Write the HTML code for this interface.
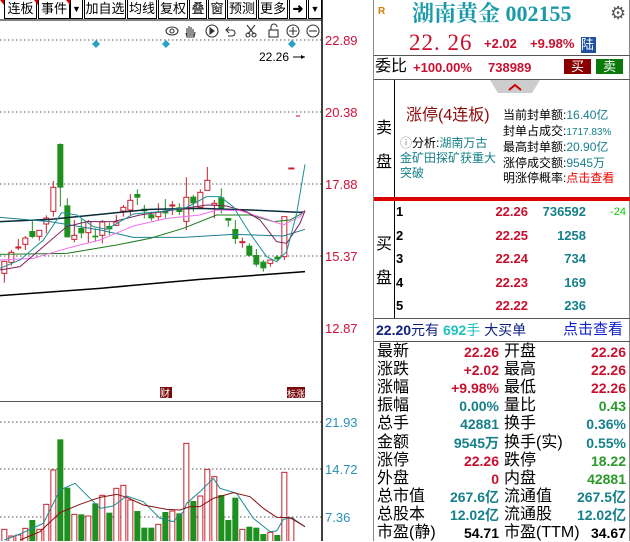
<!DOCTYPE html>
<html><head><meta charset="utf-8">
<style>
*{margin:0;padding:0;box-sizing:border-box}
body{width:630px;height:541px;background:#fff;position:relative;overflow:hidden;font-family:"Liberation Sans","Noto Sans CJK SC",sans-serif;line-height:1.15}
.a{position:absolute;white-space:nowrap}
.tb{position:absolute;top:0;height:19px;border:1px solid #000;border-top:none;font-size:13px;line-height:18px;text-align:center;background:#fff}
.r{color:#c8102e}.t{color:#16808a}.g{color:#2a9a2a}.k{color:#000}
.st{position:absolute;left:376px;width:252px;height:18px;font-size:16px;line-height:18px}
.st span{position:absolute;top:0}
.v{font-weight:bold;font-size:14px;text-align:right}
</style></head><body>
<div class="tb" style="left:4px;width:33px">连板</div>
<div class="tb" style="left:38px;width:32px">事件</div>
<div class="tb" style="left:70px;width:13px;font-size:9px">▼</div>
<div class="tb" style="left:84px;width:42px">加自选</div>
<div class="tb" style="left:127px;width:30px">均线</div>
<div class="tb" style="left:158px;width:30px">复权</div>
<div class="tb" style="left:189px;width:18px">叠</div>
<div class="tb" style="left:208px;width:18px">窗</div>
<div class="tb" style="left:227px;width:30px">预测</div>
<div class="tb" style="left:258px;width:30px">更多</div>
<div class="tb" style="left:289px;width:18px;font-weight:bold">➜</div>
<div class="tb" style="left:308px;width:14px;font-size:9px">▼</div>
<svg class="a" style="left:0;top:0" width="370" height="541">
<g fill="#c00"><polygon points="0,0 4,0 4,5"/><polygon points="34,0 38,0 38,5"/><polygon points="66,0 70,0 70,5"/></g>
<g stroke="#333" fill="none" stroke-width="1.1">
<ellipse cx="172" cy="31" rx="6" ry="4"/><circle cx="172" cy="31" r="2"/>
<path d="M187 36v-8M189 36v-10M191 36v-9M193 36v-7M186 33l1 4h7l1-5"/>
<circle cx="212" cy="31" r="6"/><path d="M210 28l4 3-4 3z" fill="#333"/>
<path d="M229 27l-3 3 3 3M226 30h6a3 3 0 010 6h-4"/>
<circle cx="248" cy="35" r="2"/><circle cx="254" cy="35" r="2"/><path d="M247 25l7 9M255 25l-7 9"/>
<rect x="269" y="30" width="9" height="7"/><path d="M271 30v-3a3 3 0 016 0"/>
<circle cx="293" cy="31" r="6"/><path d="M289 31h8M293 27v8"/>
<circle cx="313" cy="31" r="6"/><path d="M309 31h8"/>
</g>
<line x1="322" y1="0" x2="322" y2="541" stroke="#000" stroke-width="1.5"/>
<line x1="0" y1="20" x2="322" y2="20" stroke="#000"/>
<line x1="0" y1="401.5" x2="322" y2="401.5" stroke="#555"/>
<g stroke="#555" stroke-dasharray="1.5,2.5"><line x1="0" y1="40" x2="322" y2="40"/><line x1="0" y1="112" x2="322" y2="112"/><line x1="0" y1="184" x2="322" y2="184"/><line x1="0" y1="256" x2="322" y2="256"/><line x1="0" y1="422" x2="322" y2="422"/><line x1="0" y1="469" x2="322" y2="469"/><line x1="0" y1="517" x2="322" y2="517"/></g>
<g fill="#2aa0c8"><path d="M96 40l4 4-4 4-4-4z"/><path d="M166 40l4 4-4 4-4-4z"/><path d="M292 40l4 4-4 4-4-4z"/></g>
<text x="259" y="61" font-size="12" fill="#000">22.26</text>
<path d="M293 57h12" stroke="#000"/><path d="M305 57l-4-2v4z"/>
<g font-size="13" fill="#d0103a"><text x="325" y="45">22.89</text><text x="325" y="117">20.38</text><text x="325" y="189">17.88</text><text x="325" y="261">15.37</text><text x="325" y="333">12.87</text></g>
<g font-size="13" fill="#2a90b8"><text x="325" y="427">21.93</text><text x="325" y="474">14.72</text><text x="325" y="522">7.36</text></g>
<rect x="160" y="387" width="12" height="11" fill="#7a0a0a"/><text x="160" y="397" font-size="10" fill="#fff">财</text>
<rect x="287" y="387" width="18" height="11" fill="#7a0a0a"/><text x="287" y="397" font-size="9" fill="#fff">标涨</text>
<path d="M296 116h4" stroke="#c8102e"/>
<g id="cs"></g>
</svg>

<div class="a" style="left:373px;top:0;width:257px;height:541px;border-left:1px solid #888;border-right:1px solid #888"></div>
<div class="a" style="left:378px;top:6px;font-size:10px;font-weight:bold;color:#d08000">R</div>
<div class="a" style="left:412px;top:1px;font-size:22px;font-weight:bold;color:#1a9aa8;font-family:'Liberation Serif','Noto Serif CJK SC',serif">湖南黄金 002155</div>
<div class="a" style="left:610px;top:3px;font-size:18px;color:#555">⚙</div>
<div class="a" style="left:409px;top:30px;font-size:23px;color:#c8102e;font-family:'Liberation Serif',serif;letter-spacing:1px">22. 26</div>
<div class="a" style="left:484px;top:37px;font-size:13px;font-weight:bold;color:#c8102e">+2.02</div>
<div class="a" style="left:530px;top:37px;font-size:13px;font-weight:bold;color:#c8102e">+9.98%</div>
<div class="a" style="left:581px;top:37px;width:15px;height:16px;background:#2050a0;color:#fff;font-size:13px;line-height:16px">陆</div>
<div class="a" style="left:374px;top:55px;width:256px;border-top:1px solid #555"></div>
<div class="a" style="left:375px;top:58px;font-size:16px;line-height:18px">委比</div>
<div class="a" style="left:413px;top:60px;font-size:13px;font-weight:bold;color:#c8102e;line-height:15px">+100.00%</div>
<div class="a" style="left:488px;top:60px;font-size:13px;font-weight:bold;color:#c8102e;line-height:15px">738989</div>
<div class="a" style="left:564px;top:59px;width:27px;height:15px;background:#8a0000;color:#fff;font-size:13px;line-height:15px;text-align:center">买</div>
<div class="a" style="left:596px;top:59px;width:27px;height:15px;background:#0a7a0a;color:#fff;font-size:13px;line-height:15px;text-align:center">卖</div>
<div class="a" style="left:374px;top:79px;width:256px;border-top:1px solid #555"></div>
<div class="a" style="left:394px;top:80px;height:238px;border-left:1px solid #000"></div>
<svg class="a" style="left:490px;top:80px" width="50" height="14"><polygon points="0,0 50,0 42,13 8,13" fill="#ccc"/><path d="M19 10l6-5 6 5" stroke="#c00" stroke-width="2" fill="none"/></svg>
<div class="a" style="left:376px;top:112px;font-size:16px;line-height:34px;width:16px;white-space:normal">卖盘</div>
<div class="a" style="left:406px;top:106px;font-size:16px;color:#8a0a0a;line-height:20px">涨停(4连板)</div>
<div class="a" style="left:400px;top:136px;font-size:12px;color:#16808a;line-height:15px;white-space:normal;width:96px"><span style="color:#888">ⓘ</span><span style="color:#000">分析:</span>湖南万古金矿田探矿获重大突破</div>
<div class="a" style="left:503px;top:108px;font-size:12px;line-height:15.5px">当前封单额:<span class="t">16.40亿</span><br>封单占成交:<span class="t" style="font-size:10px">1717.83%</span><br>最高封单额:<span class="t">20.90亿</span><br>涨停成交额:<span class="t">9545万</span><br>明涨停概率:<span style="color:#e00">点击查看</span></div>
<div class="a" style="left:374px;top:197px;width:256px;height:4px;background:#d00"></div>
<div class="a" style="left:376px;top:228px;font-size:16px;line-height:34px;width:16px;white-space:normal">买盘</div>
<div class="a" id="bp" style="left:396px;top:204px;width:232px"></div>
<div class="a" style="left:374px;top:318px;width:256px;border-top:1px solid #555"></div>
<div class="a" style="left:376px;top:321px;font-size:14px;line-height:18px"><b style="color:#102080">22.20</b><span style="color:#102080">元有 </span><b style="color:#20c0c0">692</b><span style="color:#20c0c0">手</span> <span style="color:#102080">大买单</span></div>
<div class="a" style="left:563px;top:320px;font-size:15px;color:#1020d0;line-height:19px">点击查看</div>
<div class="a" style="left:374px;top:341px;width:256px;border-top:1px solid #555"></div>
<div id="st"></div>
<script>
var S=[["最新","22.26","r","开盘","22.26","r"],["涨跌","+2.02","r","最高","22.26","r"],["涨幅","+9.98%","r","最低","22.26","r"],["振幅","0.00%","t","量比","0.43","g"],["总手","42881","t","换手","0.36%","t"],["金额","9545万","t","换手(实)","0.55%","t"],["涨停","22.26","r","跌停","18.22","g"],["外盘","0","r","内盘","42881","g"],["总市值","267.6亿","t","流通值","267.5亿","t"],["总股本","12.02亿","t","流通股","12.02亿","t"],["市盈(静)","54.71","k","市盈(TTM)","34.67","k"]];
var h="";S.forEach(function(s,i){h+='<div class="st" style="top:'+(343+i*18.1)+'px"><span style="left:1px">'+s[0]+'</span><span class="v '+s[2]+'" style="right:129px">'+s[1]+'</span><span style="left:128px">'+s[3]+'</span><span class="v '+s[5]+'" style="right:2px">'+s[4]+'</span></div>'});
document.getElementById("st").innerHTML=h;
var B=[["22.26","736592"],["22.25","1258"],["22.24","734"],["22.23","169"],["22.22","236"]];h="";
B.forEach(function(b,i){var y=i*23.6;h+='<div class="a" style="top:'+y+'px;left:0;font-size:13px;font-weight:bold;line-height:16px">'+(i+1)+'</div><div class="a r" style="top:'+y+'px;right:100px;font-size:13px;font-weight:bold;line-height:16px">'+b[0]+'</div><div class="a t" style="top:'+y+'px;right:42px;font-size:13px;font-weight:bold;line-height:16px">'+b[1]+'</div>'});
h+='<div class="a" style="top:2px;right:2px;font-size:11px;color:#0c0">-24</div>';
document.getElementById("bp").innerHTML=h;
var C=[[13,1,424,460,424,488],[34,1,397,427,390,437],[55,1,381,383,357,390],[76,1,354,373,348,390],[97,0,333,351,300,355],[118,1,331,349,331,362],[139,1,294,312,286,340],[160,1,202,274,183,290],[181,0,72,203,70,260],[202,0,256,352,235,352],[223,1,346,358,300,367],[244,0,324,340,297,355],[265,1,305,338,300,367],[286,0,347,352,325,365],[307,1,306,346,300,370],[328,0,318,328,308,345],[349,1,306,316,285,318],[370,1,262,273,255,290],[391,1,241,270,222,285],[412,0,222,233,208,255],[433,0,266,274,255,295],[454,0,283,295,275,302],[475,1,277,290,250,300],[496,0,273,280,237,294],[517,1,255,257,243,285],[538,0,262,276,250,285],[559,1,232,304,172,330],[580,0,230,250,225,275],[601,1,217,262,208,265],[622,1,181,211,141,211],[643,1,250,255,240,295],[664,0,232,268,205,280],[685,0,294,302,294,320],[706,0,327,357,300,372],[727,1,365,368,353,383],[748,0,377,407,370,410],[769,0,405,434,387,440],[790,0,425,445,420,455],[811,1,420,430,420,440],[832,0,410,418,405,425],[853,1,290,410,290,420],[874,1,144,146,144,146]];
var V=[448,468,465,445,420,448,373,270,178,323,403,403,408,370,346,398,325,316,360,393,443,443,433,396,393,400,190,363,348,268,290,345,420,353,448,440,443,462,457,465,277,415];
var o="";
function X(z){return z/3}function Y(z){return 120+z/3}function VY(z){return 380+z/3}
C.forEach(function(c,i){var x=X(c[0]),col=c[1]?"#c8202e":"#1e9020";
o+='<line x1="'+x+'" y1="'+Y(c[4])+'" x2="'+x+'" y2="'+Y(c[5])+'" stroke="'+col+'"/>';
var t=Y(c[2]),b=Y(c[3]);if(b-t<1)b=t+1;
o+= c[1]?'<rect x="'+(x-2.5)+'" y="'+t+'" width="5" height="'+(b-t)+'" fill="#fff" stroke="'+col+'"/>':'<rect x="'+(x-3)+'" y="'+t+'" width="6" height="'+(b-t)+'" fill="'+col+'"/>';
var vt=VY(V[i]);o+= c[1]?'<rect x="'+(x-2.5)+'" y="'+vt+'" width="5" height="'+(542-vt)+'" fill="#fff" stroke="#c8202e"/>':'<rect x="'+(x-3)+'" y="'+vt+'" width="6" height="'+(542-vt)+'" fill="#1e9020"/>';});
function L(p,col,w,f){var s=[];for(var i=0;i<p.length;i+=2)s.push(X(p[i])+","+f(p[i+1]));o+='<polyline points="'+s.join(" ")+'" fill="none" stroke="'+col+'" stroke-width="'+w+'"/>';}
L([0,305,150,298,300,283,450,268,600,265,750,270,900,277,915,275],"#0a2a3a",1.5,Y);
L([0,527,300,505,600,478,915,455],"#000",1.5,Y);
L([0,292,150,305,300,330,400,352,550,352,700,343,850,348,915,328],"#1a8090",1,Y);
L([0,403,200,400,350,375,450,355,550,325,650,285,750,285,820,305,870,300,915,275],"#1a7a1a",1,Y);
L([0,420,100,415,200,385,300,360,400,318,500,295,600,285,650,270,720,272,800,297,850,315,900,290,915,270],"#f070f0",1,Y);
L([0,450,60,440,130,380,200,320,260,305,340,305,420,285,520,270,620,255,680,258,740,275,780,300,830,365,860,370,900,310,915,272],"#802060",1,Y);
L([0,445,60,420,130,360,185,278,230,285,280,320,320,328,400,282,480,275,560,262,620,230,660,230,700,260,750,340,800,410,830,425,860,395,890,280,915,133],"#1a9098",1,Y);
L([13,480,60,462,130,430,180,330,225,310,270,355,300,385,340,378,380,348,430,365,480,415,520,425,550,395,560,370,600,335,640,295,660,325,710,340,760,415,810,455,830,453,850,418,875,413,915,440],"#1a8a90",1,VY);
L([60,480,120,455,180,398,240,373,300,352,350,343,380,352,430,375,500,388,540,390,570,380,600,380,640,355,700,338,750,350,790,385,830,412,870,413,915,440],"#8a1010",1,VY);
document.getElementById("cs").innerHTML=o;
</script>
</body></html>
